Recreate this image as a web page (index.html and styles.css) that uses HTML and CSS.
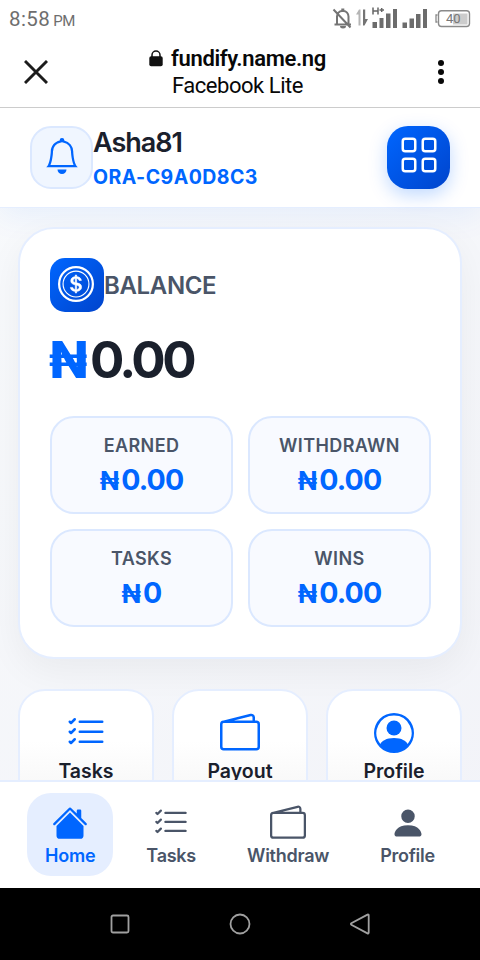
FILE: index.html
```html
<!DOCTYPE html>
<html lang="en">
<head>
<meta charset="utf-8">
<title>Fundify</title>
<link rel="stylesheet" href="styles.css">
</head>
<body>
<svg class="defs" width="0" height="0" aria-hidden="true">
  <symbol id="list-check" viewBox="0 0 16 16"><path d="M5 11.5a.5.5 0 0 1 .5-.5h9a.5.5 0 0 1 0 1h-9a.5.5 0 0 1-.5-.5m0-4a.5.5 0 0 1 .5-.5h9a.5.5 0 0 1 0 1h-9a.5.5 0 0 1-.5-.5m0-4a.5.5 0 0 1 .5-.5h9a.5.5 0 0 1 0 1h-9a.5.5 0 0 1-.5-.5M3.854 2.146a.5.5 0 0 1 0 .708l-1.5 1.5a.5.5 0 0 1-.708 0l-.5-.5a.5.5 0 1 1 .708-.708L2 3.293l1.146-1.147a.5.5 0 0 1 .708 0m0 4a.5.5 0 0 1 0 .708l-1.5 1.5a.5.5 0 0 1-.708 0l-.5-.5a.5.5 0 1 1 .708-.708L2 7.293l1.146-1.147a.5.5 0 0 1 .708 0m0 4a.5.5 0 0 1 0 .708l-1.5 1.5a.5.5 0 0 1-.708 0l-.5-.5a.5.5 0 0 1 .708-.708l.146.147 1.146-1.147a.5.5 0 0 1 .708 0"/></symbol>
  <symbol id="wallet" viewBox="0 0 16 16"><path d="M12.136.326A1.5 1.5 0 0 1 14 1.78V3h.5A1.5 1.5 0 0 1 16 4.5v9a1.5 1.5 0 0 1-1.5 1.5h-13A1.5 1.5 0 0 1 0 13.5v-9a1.5 1.5 0 0 1 1.432-1.499zM5.562 3H13V1.78a.5.5 0 0 0-.621-.484zM1.5 4a.5.5 0 0 0-.5.5v9a.5.5 0 0 0 .5.5h13a.5.5 0 0 0 .5-.5v-9a.5.5 0 0 0-.5-.5z"/></symbol>
</svg>

<div class="status">
  <div class="clock">8:58<span>PM</span></div>
  <svg class="indicators" width="140" height="24" viewBox="0 0 140 24">
    <g fill="none" stroke="#747474" stroke-width="2">
      <path d="M5 18V10.500a5 5.500 0 0 1 5-5.500h1.500a5 5.500 0 0 1 5 5.500V18M2.500 18.500h16.500M1.500 3.500l17 18"/>
      <path d="M10.800 5V2.500" stroke-width="3"/>
    </g>
    <path d="M8 20h6a3 2.500 0 0 1-6 0z" fill="#747474"/>
    <path d="M28.500 19.500V3.500h-1.500l-3 5h2.500v11z" fill="#b5b5b5"/>
    <path d="M31 3.500h2.200V13H36l-3.500 6.500H31z" fill="#747474"/>
    <g fill="none" stroke="#666" stroke-width="1.500"><path d="M41 1.500v7M46 1.500v7M41 5h5M47.500 4h4.500M49.700 2v4"/></g>
    <g fill="#6c6c6c">
      <path d="M40.500 16h4.500v6h-4.500zM47.500 12h4v10h-4zM54 7.500h4.500V22H54zM61 3h4v19h-4z"/>
      <path d="M70.500 16.500H75V22h-4.500zM77.500 12.500H82V22h-4.500zM84 8h4.500v14H84zM91 3h4v19h-4z"/>
    </g>
    <path d="M121 7.500h14.500v11H121z" fill="#ccc"/>
    <rect x="106.500" y="4.700" width="31" height="15.800" rx="3" fill="none" stroke="#8a8a8a" stroke-width="1.400"/>
    <path d="M105.500 9h-1.500v7h1.500" fill="none" stroke="#8a8a8a" stroke-width="1.300"/>
    <text x="114" y="16.500" class="battery">40</text>
  </svg>
</div>

<div class="browser">
  <svg class="close" width="24" height="24" viewBox="0 0 24 24"><path d="M1 1l22 22M23 1L1 23" stroke="#1c1c1c" stroke-width="2.900"/></svg>
  <div class="site">
    <div class="host">
      <svg width="14" height="17" viewBox="0 0 14 17"><path d="M3 7V5a4 4 0 0 1 8 0v2" fill="none" stroke="#111" stroke-width="1.500"/><rect x=".3" y="6.300" width="13.400" height="10" rx="1.800" fill="#111"/></svg>
      <span>fundify.name.ng</span>
    </div>
    <div class="via">Facebook Lite</div>
  </div>
  <svg class="more" width="8" height="26" viewBox="0 0 8 26"><circle cx="4" cy="4" r="3"/><circle cx="4" cy="13" r="3"/><circle cx="4" cy="22" r="3"/></svg>
</div>

<div class="app">
  <header class="header">
    <div class="bell">
      <svg width="36" height="36" viewBox="0 0 16 16"><path d="M8 16a2 2 0 0 0 2-2H6a2 2 0 0 0 2 2M8 1.918l-.797.161A4 4 0 0 0 4 6c0 .628-.134 2.197-.459 3.742-.16.767-.376 1.566-.663 2.258h10.244c-.287-.692-.502-1.490-.663-2.258C12.134 8.197 12 6.628 12 6a4 4 0 0 0-3.203-3.920zM14.220 12c.223.447.481.801.78 1H1c.299-.199.557-.553.78-1C2.680 10.200 3 6.880 3 6c0-2.420 1.720-4.440 4.005-4.901a1 1 0 1 1 1.990 0A5 5 0 0 1 13 6c0 .88.32 4.200 1.220 6"/></svg>
    </div>
    <div class="user">
      <div class="name">Asha81</div>
      <div class="code">ORA-C9A0D8C3</div>
    </div>
    <div class="menu">
      <svg width="40" height="40" viewBox="0 0 16 16" fill="none" stroke="#fff"><rect x="1.500" y="1.500" width="5" height="5" rx="1"/><rect x="9.500" y="1.500" width="5" height="5" rx="1"/><rect x="1.500" y="9.500" width="5" height="5" rx="1"/><rect x="9.500" y="9.500" width="5" height="5" rx="1"/></svg>
    </div>
  </header>

  <main class="content">
    <section class="card">
      <div class="card-head">
        <div class="coin">
          <svg width="36" height="36" viewBox="0 0 16 16"><path d="M5.500 9.511c.076.954.83 1.697 2.182 1.785V12h.6v-.709c1.400-.098 2.218-.846 2.218-1.932 0-.987-.626-1.496-1.745-1.760l-.473-.112V5.570c.6.068.982.396 1.074.85h1.052c-.076-.919-.864-1.638-2.126-1.716V4h-.6v.719c-1.195.117-2.010.836-2.010 1.853 0 .9.606 1.472 1.613 1.707l.397.098v2.034c-.615-.093-1.022-.43-1.114-.9zm2.177-2.166c-.59-.137-.91-.416-.91-.836 0-.47.345-.822.915-.925v1.760h-.005zm.692 1.193c.717.166 1.048.435 1.048.91 0 .542-.412.914-1.135.982V8.518z" stroke="#fff" stroke-width=".25"/><path d="M8 15A7 7 0 1 1 8 1a7 7 0 0 1 0 14m0 1A8 8 0 1 0 8 0a8 8 0 0 0 0 16"/><path d="M8 13.500a5.500 5.500 0 1 1 0-11 5.500 5.500 0 0 1 0 11m0 .5A6 6 0 1 0 8 2a6 6 0 0 0 0 12"/></svg>
        </div>
        <span>BALANCE</span>
      </div>
      <div class="amount"><span class="naira">₦</span>0.00</div>
      <div class="stats">
        <div class="stat"><div class="label">EARNED</div><div class="value"><span class="naira">₦</span>0.00</div></div>
        <div class="stat"><div class="label">WITHDRAWN</div><div class="value"><span class="naira">₦</span>0.00</div></div>
        <div class="stat"><div class="label">TASKS</div><div class="value"><span class="naira">₦</span>0</div></div>
        <div class="stat"><div class="label">WINS</div><div class="value"><span class="naira">₦</span>0.00</div></div>
      </div>
    </section>

    <section class="tiles">
      <div class="tile"><svg><use href="#list-check"/></svg><span>Tasks</span></div>
      <div class="tile"><svg><use href="#wallet"/></svg><span>Payout</span></div>
      <div class="tile"><svg viewBox="0 0 16 16"><path d="M11 6a3 3 0 1 1-6 0 3 3 0 0 1 6 0"/><path fill-rule="evenodd" d="M0 8a8 8 0 1 1 16 0A8 8 0 0 1 0 8m8-7a7 7 0 0 0-5.468 11.370C3.242 11.226 4.805 10 8 10s4.757 1.225 5.468 2.370A7 7 0 0 0 8 1"/></svg><span>Profile</span></div>
    </section>
  </main>

  <nav class="tabs">
    <div class="tab active"><svg viewBox="0 0 16 16"><path d="M8.707 1.500a1 1 0 0 0-1.414 0L.646 8.146a.5.5 0 0 0 .708.708L8 2.207l6.646 6.647a.5.5 0 0 0 .708-.708L13 5.793V2.500a.5.5 0 0 0-.5-.5h-1a.5.5 0 0 0-.5.5v1.293z"/><path d="m8 3.293 6 6V13.500a1.500 1.500 0 0 1-1.500 1.500h-9A1.500 1.500 0 0 1 2 13.500V9.293z"/></svg><span>Home</span></div>
    <div class="tab"><svg><use href="#list-check"/></svg><span>Tasks</span></div>
    <div class="tab"><svg><use href="#wallet"/></svg><span>Withdraw</span></div>
    <div class="tab"><svg viewBox="0 0 16 16"><path d="M3 14s-1 0-1-1 1-4 6-4 6 3 6 4-1 1-1 1zm5-6a3 3 0 1 0 0-6 3 3 0 0 0 0 6"/></svg><span>Profile</span></div>
  </nav>
</div>

<div class="system">
  <svg width="24" height="24" viewBox="0 0 24 24"><rect x="3.500" y="3.500" width="17" height="17" rx="1.500"/></svg>
  <svg width="24" height="24" viewBox="0 0 24 24"><circle cx="12" cy="12" r="9.500"/></svg>
  <svg width="24" height="24" viewBox="0 0 24 24"><path d="M20.700 3.300v17.400a.8.8 0 0 1-1.200.7L3.300 12.700a.8.8 0 0 1 0-1.400L19.500 2.600a.8.8 0 0 1 1.200.7z"/></svg>
</div>
</body>
</html>
```
FILE: styles.css
```css
* { box-sizing: border-box; }

body {
  margin: 0;
  width: 480px;
  height: 960px;
  overflow: hidden;
  display: flex;
  flex-direction: column;
  background: #fff;
  font-family: Inter, sans-serif;
  color: #1a202c;
}

svg { display: block; flex: none; }
.defs { position: absolute; }

/* device status bar */
.status {
  height: 37px;
  display: flex;
  justify-content: space-between;
  padding: 6px 8px 0 9px;
  font-family: Roboto, sans-serif;
  color: #6e6e6e;
}
.clock { font-size: 20.500px; line-height: 26px; letter-spacing: 0.400px; }
.clock span { font-size: 15px; letter-spacing: -0.300px; margin-left: 3px; }
.battery { font-size: 13px; fill: #777; }

/* in-app browser bar */
.browser {
  height: 71px;
  display: flex;
  align-items: center;
  justify-content: space-between;
  padding: 0 35px 0 24px;
  border-bottom: 1px solid #ccc;
  font-family: Roboto, sans-serif;
  color: #080808;
}
.site { display: flex; flex-direction: column; align-items: center; margin-right: 10px; }
.host { display: flex; align-items: center; gap: 8px; font-size: 22px; font-weight: 600; line-height: 27px; letter-spacing: -0.350px; }
.via { font-size: 22px; line-height: 27px; letter-spacing: -0.450px; }
.more { fill: #080808; }

.app {
  height: 780px;
  display: flex;
  flex-direction: column;
  overflow: hidden;
  background: linear-gradient(135deg, #f8fafc, #f2f3f8);
}

.header {
  height: 100px;
  flex: none;
  display: flex;
  align-items: center;
  padding: 0 30px;
  background: #fff;
  border-bottom: 1px solid #e5eeff;
  box-shadow: 0 6px 30px rgba(0, 102, 255, 0.080);
}
.bell, .menu {
  width: 63px;
  height: 63px;
  border-radius: 21px;
  display: flex;
  align-items: center;
  justify-content: center;
  padding-bottom: 3px;
}
.bell { background: #f0f6ff; border: 2px solid #dbe8ff; fill: #06f; }
.menu {
  margin-left: auto;
  padding-bottom: 5px;
  background: linear-gradient(135deg, #06f, #0044cc);
  box-shadow: 0 6px 18px rgba(0, 102, 255, 0.250);
}
.name { font-size: 27px; font-weight: 600; line-height: 34px; letter-spacing: -1.000px; }
.code { font-size: 19.500px; font-weight: 700; line-height: 24px; letter-spacing: 0.450px; color: #06f; margin-top: 5px; }
.user { padding-bottom: 1px; }

.content { flex: 1; min-height: 0; overflow: hidden; padding: 19px 18px 0; }

.card {
  height: 432px;
  padding: 29px 29px 29px 30px;
  background: #fff;
  border: 2px solid #e5eeff;
  border-radius: 36px;
  box-shadow: 0 12px 36px rgba(0, 0, 0, 0.050);
}
.card-head { display: flex; align-items: center; font-size: 24px; font-weight: 600; letter-spacing: -0.350px; color: #4a5568; }
.coin {
  width: 54px;
  height: 54px;
  border-radius: 15px;
  display: flex;
  align-items: center;
  justify-content: center;
  background: linear-gradient(135deg, #06f, #0044cc);
  fill: #fff;
  padding: 0 2px 2px 0;
}
.amount { font-size: 51px; font-weight: 700; line-height: 60px; letter-spacing: -3.500px; margin-top: 18px; margin-left: -1px; }
.naira { color: #06f; }
.amount .naira { font-weight: 800; margin-right: 6px; }
.value .naira { font-size: 0.900em; margin-right: 3px; }
.stats { display: grid; grid-template-columns: 1fr 1fr; gap: 15px; margin-top: 26px; }
.stat {
  height: 98px;
  padding-top: 17px;
  text-align: center;
  background: #f8faff;
  border: 2px solid #dbe8ff;
  border-radius: 24px;
}
.label { font-size: 18px; font-weight: 600; line-height: 22px; letter-spacing: 0.400px; color: #4a5568; }
.value { font-size: 28.500px; font-weight: 700; line-height: 35px; letter-spacing: -0.900px; margin-top: 5px; color: #06f; }

.tiles { display: grid; grid-template-columns: repeat(3, 1fr); gap: 18px; margin-top: 30px; }
.tile {
  height: 130px;
  display: flex;
  flex-direction: column;
  align-items: center;
  padding-top: 22px;
  background: linear-gradient(#fff, #fff 50px, #f9f9f9 90px);
  border: 2px solid #e5eeff;
  border-radius: 27px;
  font-size: 19.500px;
  font-weight: 600;
  line-height: 24px;
  gap: 6px;
}
.tile svg { width: 40px; height: 40px; fill: #06f; }

.tabs {
  height: 108px;
  flex: none;
  display: flex;
  justify-content: center;
  gap: 15px;
  padding-top: 11px;
  background: #fff;
  border-top: 2px solid #e5eeff;
}
.tab {
  height: 83px;
  display: flex;
  flex-direction: column;
  align-items: center;
  padding: 12px 18px 0;
  border-radius: 24px;
  font-size: 18px;
  font-weight: 600;
  line-height: 22px;
  letter-spacing: -0.250px;
  gap: 4px;
  color: #4a5568;
}
.tab svg { width: 36px; height: 36px; fill: currentColor; }
.active { background: #e5eeff; color: #06f; }

.system {
  height: 72px;
  display: flex;
  align-items: center;
  justify-content: center;
  gap: 96px;
  background: #000;
  fill: none;
  stroke: #a0a0a0;
  stroke-width: 1.800;
}
```
